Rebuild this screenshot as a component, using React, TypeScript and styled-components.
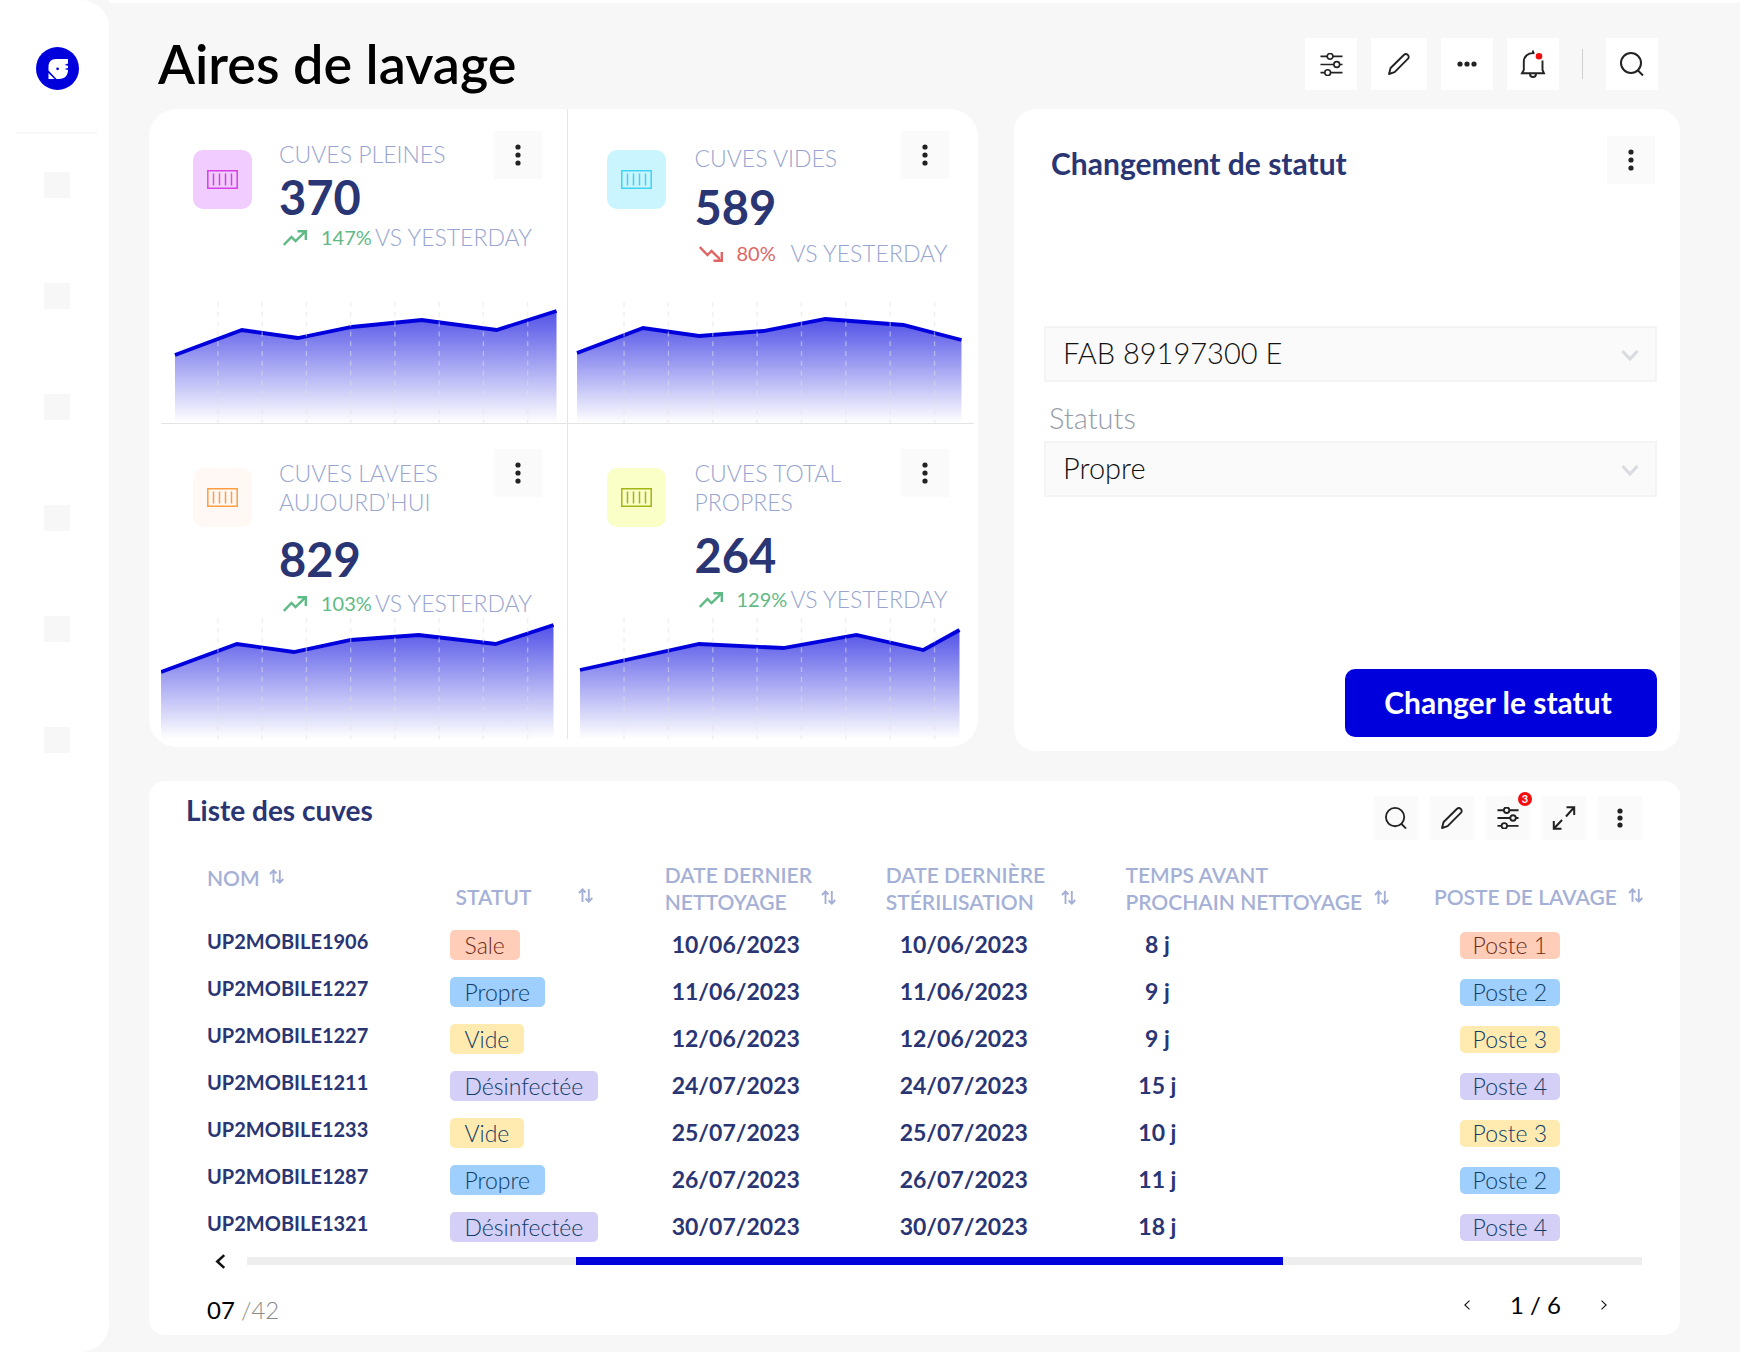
import React from "react";
import styled, { createGlobalStyle } from "styled-components";

const color = {
  page: "#f7f7f7",
  card: "#ffffff",
  soft: "#fafafa",
  line: "#e4e4e4",
  blue: "#0000dd",
  navy: "#2a3573",
  muted: "#a5b0d6",
  label: "#98a5d0",
  ink: "#222222",
  up: "#5fba85",
  down: "#e06666",
};

const GlobalStyle = createGlobalStyle`
  *, *::before, *::after { box-sizing: border-box; }
  body {
    margin: 0;
    background: ${color.page};
    font-family: Lato, "Open Sans", sans-serif;
    color: ${color.navy};
  }
  button, select { font-family: inherit; }
  h1, h2, h3, p { margin: 0; }
`;

/* ---------- Shell ---------- */

const Page = styled.div`
  display: grid;
  grid-template-columns: 109px minmax(0, 1fr);
  min-height: 100vh;
  background: ${color.page};
`;

const Sidebar = styled.aside`
  display: flex;
  flex-direction: column;
  align-items: center;
  padding: 47px 12px 0 17px;
  background: ${color.card};
  border-radius: 0 28px 28px 0;
`;

const HomeLink = styled.a`
  display: block;
  width: 43px;
  height: 43px;
`;

const SideNav = styled.nav`
  display: flex;
  flex-direction: column;
  align-items: center;
  gap: 85px;
  width: 100%;
  margin-top: 42px;
  padding-top: 38px;
  border-top: 2px solid ${color.page};
`;

const SideLink = styled.a`
  width: 26px;
  height: 26px;
  background: ${color.page};
`;

const Main = styled.main`
  padding: 0 60px 16px 40px;
  border-top: 3px solid ${color.card};
`;

const Header = styled.header`
  display: flex;
  align-items: center;
  justify-content: space-between;
  padding: 35px 22px 19px 9px;
`;

const PageTitle = styled.h1`
  font-size: 54px;
  line-height: 52px;
  font-weight: 600;
  color: #000;
`;

const Toolbar = styled.div<{ $gap: number }>`
  display: flex;
  align-items: center;
  gap: ${(p) => p.$gap}px;
`;

const Separator = styled.span`
  width: 1px;
  height: 30px;
  margin: 0 9px;
  background: #cfcfcf;
`;

const IconButton = styled.button<{ $size: number; $width?: number; $bg?: string }>`
  position: relative;
  display: grid;
  place-items: center;
  flex: none;
  width: ${(p) => p.$width ?? p.$size}px;
  height: ${(p) => p.$size}px;
  padding: 0;
  border: 0;
  background: ${(p) => p.$bg ?? color.soft};
  color: ${color.ink};
  cursor: pointer;
`;

const CountBadge = styled.span`
  position: absolute;
  top: -4px;
  right: -2px;
  width: 14px;
  height: 14px;
  border-radius: 50%;
  background: #f40d0d;
  color: #fff;
  font-size: 11px;
  line-height: 14px;
  font-weight: 700;
  text-align: center;
`;

const TopRow = styled.div`
  display: grid;
  grid-template-columns: minmax(0, 829fr) minmax(0, 666fr);
  align-items: start;
  gap: 36px;
`;

/* ---------- Statistic cells ---------- */

const StatsCard = styled.section`
  display: grid;
  grid-template-columns: repeat(2, minmax(0, 1fr));
  padding: 0 4px 8px 12px;
  border-radius: 28px;
  background: ${color.card};
`;

const StatCell = styled.article<{ $right: boolean; $bottom: boolean }>`
  display: flex;
  flex-direction: column;
  min-height: 315px;
  padding-top: ${(p) => (p.$bottom ? 25 : 22)}px;
  border-right: ${(p) => (p.$right ? "0" : `1px solid ${color.line}`)};
  border-bottom: ${(p) => (p.$bottom ? "0" : `1px solid ${color.line}`)};
`;

const StatHead = styled.div<{ $right: boolean }>`
  display: grid;
  grid-template-columns: 59px minmax(0, 1fr) 48px;
  column-gap: ${(p) => (p.$right ? 29 : 27)}px;
  padding: 0 25px 0 ${(p) => (p.$right ? 39 : 32)}px;
`;

const Tile = styled.span<{ $bg: string; $fg: string }>`
  display: grid;
  place-items: center;
  width: 59px;
  height: 59px;
  margin-top: 19px;
  border-radius: 10px;
  background: ${(p) => p.$bg};
  color: ${(p) => p.$fg};
`;

const StatText = styled.div<{ $top: number }>`
  padding-top: ${(p) => p.$top}px;
  white-space: nowrap;
`;

const StatLabel = styled.h3`
  font-size: 23px;
  line-height: 29px;
  font-weight: 300;
  color: ${color.label};
  white-space: pre-line;
`;

const StatValue = styled.p<{ $gap: number }>`
  margin-top: ${(p) => p.$gap}px;
  font-size: 47px;
  line-height: 44px;
  font-weight: 700;
`;

const Trend = styled.p<{ $gap: number }>`
  display: grid;
  grid-template-columns: 38px 54px auto;
  align-items: center;
  margin-top: ${(p) => p.$gap}px;
  padding-left: 4px;
  font-size: 23px;
  line-height: 29px;
  font-weight: 300;
  color: ${color.label};
`;

const TrendValue = styled.span<{ $up: boolean }>`
  font-size: 20px;
  font-weight: 400;
  color: ${(p) => (p.$up ? color.up : color.down)};
`;

const ChartSvg = styled.svg`
  display: block;
  width: 100%;
  height: 121px;
  margin-top: auto;
`;

/* ---------- Status form ---------- */

const FormCard = styled.form`
  display: flex;
  flex-direction: column;
  min-height: 642px;
  padding: 27px 23px 14px 30px;
  border-radius: 22px;
  background: ${color.card};
`;

const FormHead = styled.div`
  display: flex;
  justify-content: space-between;
  padding: 0 2px 0 7px;
`;

const SectionTitle = styled.h2`
  font-size: 28px;
  line-height: 28px;
  font-weight: 700;
`;

const FormTitle = styled(SectionTitle)`
  font-size: 30px;
  line-height: 54px;
`;

const Fields = styled.div`
  display: flex;
  flex-direction: column;
  margin-top: 136px;
`;

const SelectBox = styled.div`
  position: relative;
`;

const Select = styled.select`
  display: block;
  appearance: none;
  width: 100%;
  height: 56px;
  padding: 0 48px 3px 17px;
  border: 2px solid #f4f4f4;
  border-radius: 0;
  background: ${color.soft};
  color: #111;
  font-size: 29px;
  font-weight: 300;
`;

const SelectArrow = styled.svg`
  position: absolute;
  top: 23px;
  right: 18px;
  pointer-events: none;
`;

const FieldLabel = styled.label`
  padding: 18px 5px 5px;
  font-size: 29px;
  line-height: 36px;
  font-weight: 300;
  color: #959ca8;
`;

const SubmitButton = styled.button`
  align-self: flex-end;
  width: 312px;
  height: 68px;
  margin-top: auto;
  padding: 0 6px 2px 0;
  border: 0;
  border-radius: 10px;
  background: ${color.blue};
  color: #fff;
  font-size: 30px;
  font-weight: 700;
  cursor: pointer;
`;

/* ---------- List ---------- */

const ListCard = styled.section`
  margin-top: 30px;
  padding: 15px 38px 10px 58px;
  border-radius: 16px;
  background: ${color.card};
`;

const ListHead = styled.div`
  display: flex;
  align-items: flex-start;
  justify-content: space-between;
  margin-left: -21px;
`;

const Table = styled.table`
  width: 100%;
  margin-top: 20px;
  table-layout: fixed;
  border-collapse: collapse;
`;

const HeadCell = styled.th<{ $share: number; $raised?: boolean; $inset?: number }>`
  width: ${(p) => p.$share}%;
  height: 60px;
  padding: ${(p) => (p.$raised ? 4 : 0)}px 0 5px ${(p) => p.$inset ?? 0}px;
  vertical-align: ${(p) => (p.$raised ? "top" : "bottom")};
  text-align: left;
`;

const HeadInner = styled.div<{ $single: boolean }>`
  display: flex;
  align-items: flex-end;
  gap: 9px;
  padding-bottom: ${(p) => (p.$single ? 5 : 0)}px;

  button { margin-bottom: ${(p) => (p.$single ? 7 : 10)}px; }
`;

const HeadLabel = styled.span<{ $min: number }>`
  min-width: ${(p) => p.$min}px;
  font-size: 21px;
  line-height: 27px;
  font-weight: 600;
  color: ${color.muted};
  white-space: pre;
`;

const SortButton = styled.button`
  width: 15px;
  height: 15px;
  padding: 0;
  border: 0;
  background: none;
  color: ${color.muted};
  cursor: pointer;
  svg { display: block; }
`;

const Cell = styled.td`
  height: 47px;
  padding: 0;
  font-size: 23px;
  line-height: 30px;
  font-weight: 700;
`;

const NameCell = styled(Cell)`
  padding-bottom: 6px;
  font-size: 20px;
`;

const PostCell = styled(Cell)`
  padding-left: 26px;
`;

const Centered = styled.span<{ $w: number }>`
  display: inline-block;
  width: ${(p) => p.$w}px;
  text-align: center;
`;

const tones = {
  peach: { bg: "#ffcdb8", fg: "#6b2c19" },
  sky: { bg: "#9fcffc", fg: "#0f3c68" },
  sand: { bg: "#ffebb0", fg: "#0f3c68" },
  lilac: { bg: "#d4cff7", fg: "#0f3c68" },
};
type Tone = keyof typeof tones;

const Pill = styled.span<{ $tone: Tone; $wide?: boolean }>`
  display: inline-block;
  min-width: ${(p) => (p.$wide ? 100 : 0)}px;
  padding: 0 ${(p) => (p.$wide ? 8 : 15)}px;
  border-radius: 5px;
  background: ${(p) => tones[p.$tone].bg};
  color: ${(p) => tones[p.$tone].fg};
  font-size: 23px;
  line-height: ${(p) => (p.$wide ? 27 : 30)}px;
  font-weight: 300;
  text-align: center;
  vertical-align: middle;
`;

const ScrollRow = styled.div`
  display: flex;
  align-items: center;
  gap: 18px;
  margin-top: 4px;
  padding-left: 4px;
`;

const BareButton = styled.button`
  display: grid;
  place-items: center;
  width: 18px;
  height: 16px;
  padding: 0;
  border: 0;
  background: none;
  color: #111;
  cursor: pointer;
`;

const Track = styled.div`
  flex: 1;
  height: 8px;
  background: #eeeeee;
`;

const Thumb = styled.div<{ $start: number; $size: number }>`
  width: ${(p) => p.$size}%;
  height: 100%;
  margin-left: ${(p) => p.$start}%;
  background: ${color.blue};
`;

const ListFoot = styled.footer`
  display: flex;
  justify-content: space-between;
  margin-top: 21px;
  padding-right: 29px;
  font-size: 24px;
  line-height: 30px;
  color: #000;
`;

const Count = styled.p`
  padding-top: 5px;
  font-weight: 400;
  span { color: #8a8a8a; font-weight: 300; }
`;

const Pager = styled.div`
  display: flex;
  align-items: center;
  gap: 34px;
  height: 30px;
`;

/* ---------- Icons ---------- */

const Logo = () => (
  <svg width="43" height="43" viewBox="0 0 43 43" aria-hidden="true">
    <circle cx="21.5" cy="21.5" r="21.5" fill={color.blue} />
    <path
      fill="#fff"
      d="M20 12H32V16.5L28.5 18L32 18.8V21L28.5 22L32 23C32 28 29 32 23 32H20.5L12.5 23.5V20C12.5 15 15 12 20 12ZM12.5 26L18.5 32H12.5Z"
    />
    <circle cx="21.6" cy="21.8" r="1.4" fill={color.blue} />
  </svg>
);

const Sliders = ({ size, weight }: { size: number; weight: number }) => (
  <svg width={size} height={size} viewBox="0 0 24 24" fill="none" stroke="currentColor" strokeWidth={weight} aria-hidden="true">
    <path d="M0.5 3.5H7.5M13.5 3.5H23.5M0.5 12H14.5M20.5 12H23.5M0.5 20.5H5M11 20.5H23.5" />
    <circle cx="10.5" cy="3.5" r="3" />
    <circle cx="17.5" cy="12" r="3" />
    <circle cx="8" cy="20.5" r="3" />
  </svg>
);

const Pencil = () => (
  <svg width="22" height="22" viewBox="0 0 22 22" fill="none" stroke="currentColor" strokeWidth="1.9" strokeLinejoin="round" aria-hidden="true">
    <path d="M1 21L2.6 15L15.8 2C17.1 0.8 18.6 0.8 19.8 1.9C21 3.1 21 4.7 19.8 5.9L6.6 19.2L1 21Z" />
  </svg>
);

const Dots = ({ vertical, step = 8 }: { vertical?: boolean; step?: number }) => (
  <svg width="24" height="24" viewBox="0 0 24 24" fill="currentColor" aria-hidden="true">
    {[-1, 0, 1].map((i) => (
      <circle key={i} cx={vertical ? 12 : 12 + i * step} cy={vertical ? 12 + i * step : 12} r="2.6" />
    ))}
  </svg>
);

const Bell = () => (
  <svg width="26" height="28" viewBox="0 0 26 28" fill="none" stroke="currentColor" strokeWidth="1.9" aria-hidden="true">
    <path d="M13 0.5V3M14.5 3.2C8 2.4 3.8 6.5 3.8 12V20L2 23.3H24L22.5 20V10.5M10 24C10 28 16 28 16 24" />
    <circle cx="19" cy="6.3" r="3.3" fill="#f40d0d" stroke="none" />
  </svg>
);

const Search = ({ size }: { size: number }) => (
  <svg width={size} height={size} viewBox="0 0 24 24" fill="none" stroke="currentColor" strokeWidth="2" aria-hidden="true">
    <circle cx="11" cy="11" r="10" />
    <path d="M17.5 18L23 23.5" />
  </svg>
);

const Expand = () => (
  <svg width="24" height="24" viewBox="0 0 24 24" fill="none" stroke="currentColor" strokeWidth="2" aria-hidden="true">
    <path d="M14 10.5L22 1.5M14.5 1.2H22.2V9M10 14L2 22.5M1.8 15V22.8H9.5" />
  </svg>
);

const Sort = () => (
  <svg width="15" height="15" viewBox="0 0 15 15" fill="none" stroke="currentColor" strokeWidth="1.9" aria-hidden="true">
    <path d="M4.5 14V1.5M1 5L4.5 1.3L7.5 4.5M10.8 1V13.5M7.5 10.5L10.8 13.7L14.3 10" />
  </svg>
);

const Container = () => (
  <svg width="31" height="19" viewBox="0 0 31 19" fill="none" stroke="currentColor" strokeWidth="1.5" aria-hidden="true">
    <path d="M0.8 0.8H30.2V18.2H0.8ZM6.5 3.5V15.5M12.5 3.5V15.5M18.5 3.5V15.5M24.5 3.5V15.5" />
  </svg>
);

const TrendArrow = ({ up }: { up: boolean }) => (
  <svg width="24" height="16" viewBox="0 0 24 16" fill="none" stroke={up ? color.up : color.down} strokeWidth="2.4" aria-hidden="true">
    {up ? (
      <path d="M0.8 15L8.5 7L12.5 11L22 1.8M14.5 1.2H22.8V10" />
    ) : (
      <path d="M0.8 1L8.5 9L12.5 5L22 14.2M14.5 14.8H22.8V6" />
    )}
  </svg>
);

const Chevron = ({ dir, size, weight }: { dir: "left" | "right"; size: number; weight: number }) => (
  <svg width={size} height={size} viewBox="0 0 14 14" fill="none" stroke="currentColor" strokeWidth={weight} aria-hidden="true">
    <path d={dir === "left" ? "M10.5 1L4 7L10.5 13" : "M3.5 1L10 7L3.5 13"} />
  </svg>
);

/* ---------- Chart ---------- */

type Point = [number, number];

const AreaChart = ({ id, points, firstTick }: { id: string; points: Point[]; firstTick: number }) => {
  const line = points.map(([x, y]) => `${x},${y}`).join(" ");
  const area = `${points[0][0]},121 ${line} ${points[points.length - 1][0]},121`;
  const ticks = Array.from({ length: 8 }, (_, i) => firstTick + i * 44.3);
  return (
    <ChartSvg viewBox="0 0 406 121" preserveAspectRatio="none" role="img" aria-label="Évolution">
      <defs>
        <linearGradient id={id} x1="0" y1="0" x2="0" y2="1">
          <stop offset="0" stopColor={color.blue} stopOpacity="0.68" />
          <stop offset="1" stopColor={color.blue} stopOpacity="0" />
        </linearGradient>
      </defs>
      <polygon points={area} fill={`url(#${id})`} />
      <polyline points={line} fill="none" stroke={color.blue} strokeWidth="3.8" />
      {ticks.map((x) => (
        <line key={x} x1={x} x2={x} y1="0" y2="121" stroke="#e2e2e6" strokeOpacity="0.5" strokeWidth="1.4" strokeDasharray="5 4.8" />
      ))}
    </ChartSvg>
  );
};

/* ---------- Data ---------- */

const stats = [
  {
    id: "pleines", label: "CUVES PLEINES", value: "370", change: "147%", up: true,
    bg: "#f0ccff", fg: "#d63fe8", top: 9, gaps: [6, 4], firstTick: 57,
    points: [[14, 53], [81, 28], [137, 36], [191, 25], [261, 18], [336, 28], [396, 9]] as Point[],
  },
  {
    id: "vides", label: "CUVES VIDES", value: "589", change: "80%", up: false,
    bg: "#caf5ff", fg: "#3fd3f5", top: 13, gaps: [12, 10], firstTick: 56,
    points: [[9, 51], [75, 26], [131, 34], [195, 29], [257, 17], [335, 23], [393, 38]] as Point[],
  },
  {
    id: "lavees", label: "CUVES LAVEES\nAUJOURD’HUI", value: "829", change: "103%", up: true,
    bg: "#fff8f4", fg: "#ff9d42", top: 10, gaps: [20, 8], firstTick: 57,
    points: [[0, 54], [76, 26], [133, 34], [190, 22], [258, 17], [335, 26], [393, 7]] as Point[],
  },
  {
    id: "total", label: "CUVES TOTAL\nPROPRES", value: "264", change: "129%", up: true,
    bg: "#faffc8", fg: "#a3b516", top: 10, gaps: [16, 8], firstTick: 56,
    points: [[12, 52], [131, 26], [215, 30], [288, 17], [355, 32], [391, 12]] as Point[],
  },
];

const columns = [
  { label: "NOM", share: 16.9, min: 51, raised: true },
  { label: "STATUT", share: 15, min: 113, inset: 6 },
  { label: "DATE DERNIER\nNETTOYAGE", share: 15.4, min: 147 },
  { label: "DATE DERNIÈRE\nSTÉRILISATION", share: 16.7, min: 166 },
  { label: "TEMPS AVANT\nPROCHAIN NETTOYAGE", share: 21.5, min: 240 },
  { label: "POSTE DE LAVAGE", share: 14.5, min: 185 },
];

type Row = { name: string; status: string; tone: Tone; date: string; days: string; post: string; postTone: Tone };

const rows: Row[] = [
  { name: "UP2MOBILE1906", status: "Sale", tone: "peach", date: "10/06/2023", days: "8 j", post: "Poste 1", postTone: "peach" },
  { name: "UP2MOBILE1227", status: "Propre", tone: "sky", date: "11/06/2023", days: "9 j", post: "Poste 2", postTone: "sky" },
  { name: "UP2MOBILE1227", status: "Vide", tone: "sand", date: "12/06/2023", days: "9 j", post: "Poste 3", postTone: "sand" },
  { name: "UP2MOBILE1211", status: "Désinfectée", tone: "lilac", date: "24/07/2023", days: "15 j", post: "Poste 4", postTone: "lilac" },
  { name: "UP2MOBILE1233", status: "Vide", tone: "sand", date: "25/07/2023", days: "10 j", post: "Poste 3", postTone: "sand" },
  { name: "UP2MOBILE1287", status: "Propre", tone: "sky", date: "26/07/2023", days: "11 j", post: "Poste 2", postTone: "sky" },
  { name: "UP2MOBILE1321", status: "Désinfectée", tone: "lilac", date: "30/07/2023", days: "18 j", post: "Poste 4", postTone: "lilac" },
];

const sections = ["Tableau de bord", "Cuves", "Lavage", "Planning", "Rapports", "Réglages"];

/* ---------- Views ---------- */

const StatBlock = ({ stat, index }: { stat: (typeof stats)[number]; index: number }) => {
  const right = index % 2 === 1;
  return (
    <StatCell $right={right} $bottom={index > 1}>
      <StatHead $right={right}>
        <Tile $bg={stat.bg} $fg={stat.fg}>
          <Container />
        </Tile>
        <StatText $top={stat.top}>
          <StatLabel>{stat.label}</StatLabel>
          <StatValue $gap={stat.gaps[0]}>{stat.value}</StatValue>
          <Trend $gap={stat.gaps[1]}>
            <TrendArrow up={stat.up} />
            <TrendValue $up={stat.up}>{stat.change}</TrendValue>
            <span>VS YESTERDAY</span>
          </Trend>
        </StatText>
        <IconButton type="button" $size={48} aria-label="Options">
          <Dots vertical />
        </IconButton>
      </StatHead>
      <AreaChart id={`fill-${stat.id}`} points={stat.points} firstTick={stat.firstTick} />
    </StatCell>
  );
};

const SelectChevron = () => (
  <SelectArrow width="18" height="13" viewBox="0 0 18 13" fill="none" stroke="#d9dbe0" strokeWidth="3" aria-hidden="true">
    <path d="M1.5 2L9 10L16.5 2" />
  </SelectArrow>
);

const StatusForm = () => (
  <FormCard onSubmit={(e) => e.preventDefault()}>
    <FormHead>
      <FormTitle>Changement de statut</FormTitle>
      <IconButton type="button" $size={48} aria-label="Options">
        <Dots vertical />
      </IconButton>
    </FormHead>
    <Fields>
      <SelectBox>
        <Select aria-label="Cuve" defaultValue="fab">
          <option value="fab">FAB 89197300 E</option>
        </Select>
        <SelectChevron />
      </SelectBox>
      <FieldLabel htmlFor="statut">Statuts</FieldLabel>
      <SelectBox>
        <Select id="statut" defaultValue="propre">
          <option value="propre">Propre</option>
        </Select>
        <SelectChevron />
      </SelectBox>
    </Fields>
    <SubmitButton type="submit">Changer le statut</SubmitButton>
  </FormCard>
);

const TankList = () => (
  <ListCard>
    <ListHead>
      <SectionTitle>Liste des cuves</SectionTitle>
      <Toolbar $gap={12}>
        <IconButton type="button" $size={44} aria-label="Rechercher"><Search size={22} /></IconButton>
        <IconButton type="button" $size={44} aria-label="Modifier"><Pencil /></IconButton>
        <IconButton type="button" $size={44} aria-label="Filtrer">
          <Sliders size={22} weight={2} />
          <CountBadge>3</CountBadge>
        </IconButton>
        <IconButton type="button" $size={44} aria-label="Agrandir"><Expand /></IconButton>
        <IconButton type="button" $size={44} aria-label="Options"><Dots vertical step={7} /></IconButton>
      </Toolbar>
    </ListHead>
    <Table>
      <thead>
        <tr>
          {columns.map((c) => (
            <HeadCell key={c.label} scope="col" $share={c.share} $raised={c.raised} $inset={c.inset}>
              <HeadInner $single={!c.label.includes("\n")}>
                <HeadLabel $min={c.min}>{c.label}</HeadLabel>
                <SortButton type="button" aria-label="Trier"><Sort /></SortButton>
              </HeadInner>
            </HeadCell>
          ))}
        </tr>
      </thead>
      <tbody>
        {rows.map((r, i) => (
          <tr key={i}>
            <NameCell>{r.name}</NameCell>
            <Cell><Pill $tone={r.tone}>{r.status}</Pill></Cell>
            <Cell><Centered $w={142}>{r.date}</Centered></Cell>
            <Cell><Centered $w={156}>{r.date}</Centered></Cell>
            <Cell><Centered $w={64}>{r.days}</Centered></Cell>
            <PostCell><Pill $tone={r.postTone} $wide>{r.post}</Pill></PostCell>
          </tr>
        ))}
      </tbody>
    </Table>
    <ScrollRow>
      <BareButton type="button" aria-label="Défiler à gauche"><Chevron dir="left" size={15} weight={2.4} /></BareButton>
      <Track>
        <Thumb $start={23.6} $size={50.7} />
      </Track>
    </ScrollRow>
    <ListFoot>
      <Count>07 <span>/42</span></Count>
      <Pager>
        <BareButton type="button" aria-label="Page précédente"><Chevron dir="left" size={10} weight={1.5} /></BareButton>
        <span>1 / 6</span>
        <BareButton type="button" aria-label="Page suivante"><Chevron dir="right" size={10} weight={1.5} /></BareButton>
      </Pager>
    </ListFoot>
  </ListCard>
);

export default function App() {
  return (
    <>
      <GlobalStyle />
      <Page>
        <Sidebar>
          <HomeLink href="#" aria-label="Accueil"><Logo /></HomeLink>
          <SideNav>
            {sections.map((s) => (
              <SideLink key={s} href="#" aria-label={s} />
            ))}
          </SideNav>
        </Sidebar>
        <Main>
          <Header>
            <PageTitle>Aires de lavage</PageTitle>
            <Toolbar $gap={14}>
              <IconButton type="button" $size={52} $bg={color.card} aria-label="Filtrer"><Sliders size={23} weight={1.7} /></IconButton>
              <IconButton type="button" $size={52} $width={56} $bg={color.card} aria-label="Modifier"><Pencil /></IconButton>
              <IconButton type="button" $size={52} $bg={color.card} aria-label="Plus"><Dots step={7} /></IconButton>
              <IconButton type="button" $size={52} $bg={color.card} aria-label="Notifications"><Bell /></IconButton>
              <Separator />
              <IconButton type="button" $size={52} $bg={color.card} aria-label="Rechercher"><Search size={24} /></IconButton>
            </Toolbar>
          </Header>
          <TopRow>
            <StatsCard>
              {stats.map((s, i) => (
                <StatBlock key={s.id} stat={s} index={i} />
              ))}
            </StatsCard>
            <StatusForm />
          </TopRow>
          <TankList />
        </Main>
      </Page>
    </>
  );
}
